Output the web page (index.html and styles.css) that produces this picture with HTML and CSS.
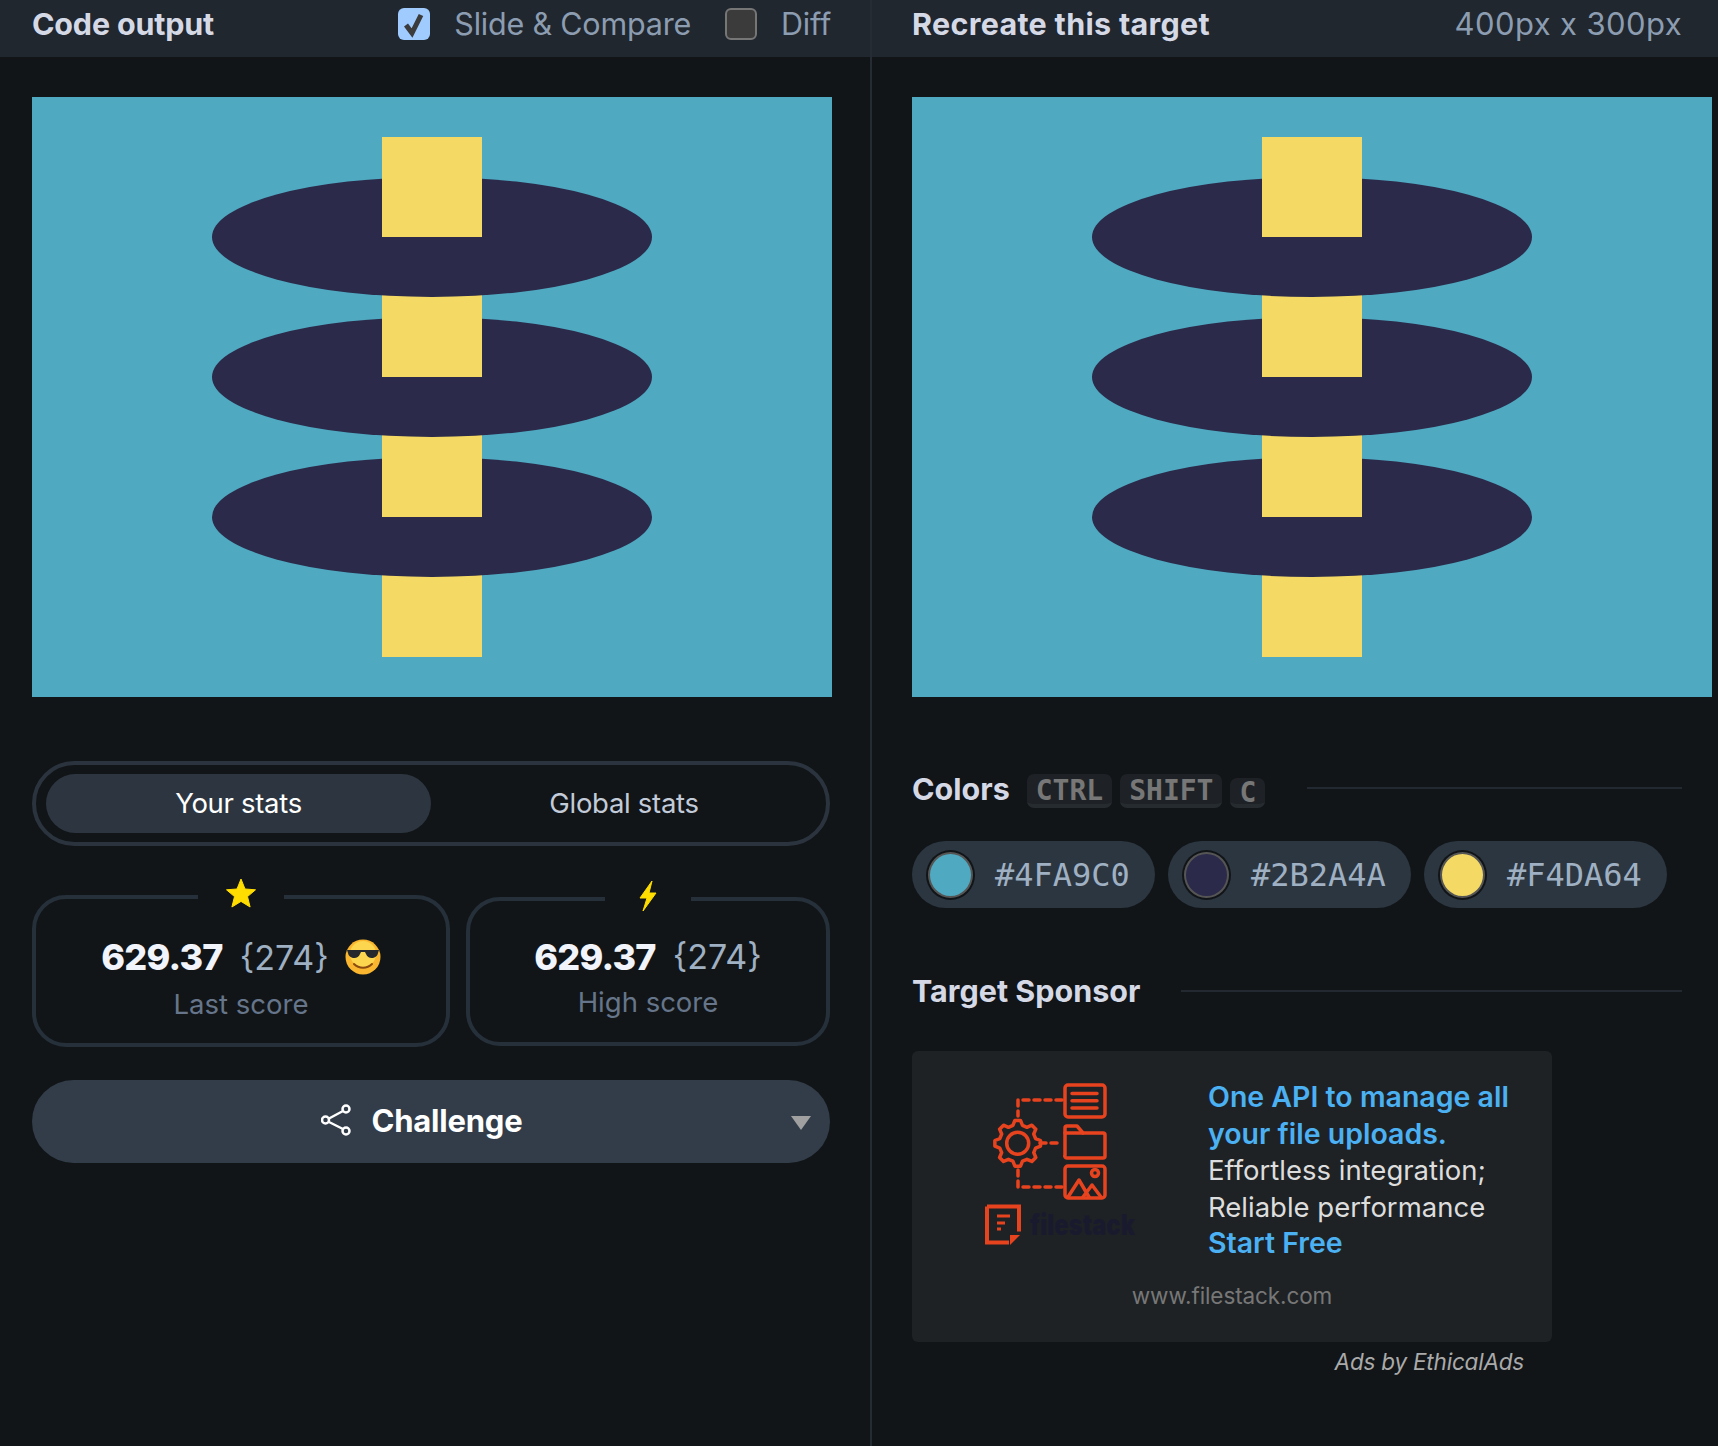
FILE: index.html
```html
<!DOCTYPE html>
<html lang="en">
<head>
    <meta charset="UTF-8">
    <meta name="viewport" content="width=device-width, initial-scale=1.0">
    <title>Code output</title>
    <link rel="stylesheet" href="styles.css">
</head>
<body>
    <svg class="defs" width="0" height="0">
        <symbol id="target-art" viewBox="0 0 800 600">
            <rect width="800" height="600" fill="#4FA9C0"/>
            <rect x="350" y="460" width="100" height="100" fill="#F4DA64"/>
            <ellipse cx="400" cy="420" rx="220" ry="60" fill="#2B2A4A"/>
            <rect x="350" y="320" width="100" height="100" fill="#F4DA64"/>
            <ellipse cx="400" cy="280" rx="220" ry="60" fill="#2B2A4A"/>
            <rect x="350" y="180" width="100" height="100" fill="#F4DA64"/>
            <ellipse cx="400" cy="140" rx="220" ry="60" fill="#2B2A4A"/>
            <rect x="350" y="40" width="100" height="100" fill="#F4DA64"/>
        </symbol>
    </svg>
    <div class="app">
        <div class="panel panel-output">
            <div class="panel-header">
                <h2>Code output</h2>
                <div class="header-options">
                    <label class="option">
                        <span class="checkbox checked">
                            <svg viewBox="0 0 32 32" width="32" height="32"><path d="M8 17l6 8L23 7" fill="none" stroke="#3b3b3b" stroke-width="5"/></svg>
                        </span>
                        Slide &amp; Compare
                    </label>
                    <label class="option">
                        <span class="checkbox"></span>
                        Diff
                    </label>
                </div>
            </div>
            <div class="panel-body">
                <svg class="canvas"><use href="#target-art"/></svg>
                <div class="stats-toggle">
                    <button class="toggle-btn active">Your stats</button>
                    <button class="toggle-btn">Global stats</button>
                </div>
                <div class="score-row">
                    <fieldset class="score-card score-last">
                        <legend>
                            <svg viewBox="0 0 30 30" width="30" height="30"><path d="M15 1l4 10 10.500 .8-8 6.800 2.600 10.400L15 23.400 5.900 29l2.600-10.400-8-6.800L11 11z" fill="#ffdd00" stroke="#ffdd00" stroke-linejoin="round"/></svg>
                        </legend>
                        <div class="score-value">
                            <strong>629.37</strong>
                            <span>{274}</span>
                            <svg class="emoji" viewBox="0 0 36 36" width="36" height="36">
                                <circle cx="18" cy="18" r="17.500" fill="#f9b62e"/>
                                <circle cx="18" cy="15" r="13" fill="#fdd64f"/>
                                <path d="M2 11h32l-1 3c-1 6-10 7-12 1l-1-2h-4l-1 2c-2 6-11 5-12-1z" fill="#25282c"/>
                                <path d="M9 25c5 5 13 5 18 0" fill="none" stroke="#8a4b12" stroke-width="2" stroke-linecap="round"/>
                            </svg>
                        </div>
                        <div class="score-label">Last score</div>
                    </fieldset>
                    <fieldset class="score-card score-high">
                        <legend>
                            <svg viewBox="0 0 30 32" width="30" height="32"><path d="M19 1L7 18h7l-4 13 13-18h-7z" fill="#ffdd00" stroke="#ffdd00" stroke-linejoin="round"/></svg>
                        </legend>
                        <div class="score-value">
                            <strong>629.37</strong>
                            <span>{274}</span>
                        </div>
                        <div class="score-label">High score</div>
                    </fieldset>
                </div>
                <button class="challenge-btn">
                    <svg viewBox="0 0 30 32" width="30" height="32">
                        <path d="M22 7L8 14.500M8 18l14 7" fill="none" stroke="#fff" stroke-width="2.500"/>
                        <circle cx="25" cy="5" r="3.500" fill="none" stroke="#fff" stroke-width="2.500"/>
                        <circle cx="4.500" cy="16" r="3.500" fill="none" stroke="#fff" stroke-width="2.500"/>
                        <circle cx="25" cy="27" r="3.500" fill="none" stroke="#fff" stroke-width="2.500"/>
                    </svg>
                    Challenge
                    <span class="caret"></span>
                </button>
            </div>
        </div>
        <div class="panel panel-target">
            <div class="panel-header">
                <h2>Recreate this target</h2>
                <span class="target-size">400px x 300px</span>
            </div>
            <div class="panel-body">
                <svg class="canvas"><use href="#target-art"/></svg>
                <div class="section-title colors-title">
                    <h3>Colors</h3>
                    <span class="keys">
                        <kbd>CTRL</kbd>
                        <kbd>SHIFT</kbd>
                        <kbd class="key-short">C</kbd>
                    </span>
                    <span class="section-rule"></span>
                </div>
                <div class="color-chips">
                    <div class="chip"><span class="swatch swatch-blue"></span>#4FA9C0</div>
                    <div class="chip"><span class="swatch swatch-navy"></span>#2B2A4A</div>
                    <div class="chip"><span class="swatch swatch-yellow"></span>#F4DA64</div>
                </div>
                <div class="section-title sponsor-title">
                    <h3>Target Sponsor</h3>
                    <span class="section-rule"></span>
                </div>
                <div class="ad-card">
                    <div class="ad-main">
                        <svg class="ad-logo" viewBox="0 0 200 190" width="200" height="190">
                            <g fill="none" stroke="#e8431f" stroke-width="3.500" stroke-linecap="round" stroke-linejoin="round">
                                <rect x="95" y="15" width="40" height="32" rx="3"/>
                                <path d="M102 23.500h25M102 30.700h25M102 38h25"/>
                                <path d="M95 85V58a2 2 0 0 1 2-2h10l6 7h20a2 2 0 0 1 2 2v21a2 2 0 0 1-2 2H97a2 2 0 0 1-2-3z"/>
                                <path d="M95 63h18"/>
                                <rect x="95" y="96" width="40" height="32" rx="3"/>
                                <circle cx="125" cy="103" r="3.500"/>
                                <path d="M98 127l11-17 10 17M113 127l9-12 9 12"/>
                                <path d="M92 30H48v16M48 100v17h44M70 73h22" stroke-dasharray="6 5"/>
                                <polygon transform="translate(47.700 73.300)" points="17.870,-4.790 22.830,-2.800 22.830,2.800 17.870,4.790 16.020,9.250 18.120,14.160 14.160,18.120 9.250,16.020 4.790,17.870 2.800,22.830 -2.800,22.830 -4.790,17.870 -9.250,16.020 -14.160,18.120 -18.120,14.160 -16.020,9.250 -17.870,4.790 -22.830,2.800 -22.830,-2.800 -17.870,-4.790 -16.020,-9.250 -18.120,-14.160 -14.160,-18.120 -9.250,-16.020 -4.790,-17.870 -2.800,-22.830 2.800,-22.830 4.790,-17.870 9.250,-16.020 14.160,-18.120 18.120,-14.160 16.020,-9.250"/>
                                <circle cx="47.700" cy="73.300" r="11"/>
                            </g>
                            <path d="M17 136.500h32v25M39 172.500H17v-36" fill="none" stroke="#e8431f" stroke-width="4"/>
                            <path d="M27 146h13M27 153h8M27 159h4" stroke="#e8431f" stroke-width="3"/>
                            <path d="M40 175v-10h10z" fill="#e8431f"/>
                            <text class="logo-word" x="60" y="165" textLength="105" lengthAdjust="spacingAndGlyphs">filestack</text>
                        </svg>
                        <p class="ad-copy">
                            <strong>One API to manage all your file uploads.</strong><br>
                            Effortless integration;<br>
                            Reliable performance<br>
                            <strong>Start Free</strong>
                        </p>
                    </div>
                    <div class="ad-url">www.filestack.com</div>
                </div>
                <div class="ad-credit">Ads by EthicalAds</div>
            </div>
        </div>
    </div>
</body>
</html>
```

FILE: styles.css
```css
* {
    box-sizing: border-box;
}
body {
    margin: 0;
    height: 1446px;
    overflow: hidden;
    font-family: 'Inter', sans-serif;
    background: #111518;
    color: #d5d9e6;
}
.defs {
    display: block;
    height: 0;
}
.app {
    display: flex;
    height: 100%;
}
.panel-output {
    width: 872px;
    border-right: 2px solid #262c34;
}
.panel-target {
    flex: 1;
    min-width: 0;
}
.panel-header {
    display: flex;
    align-items: center;
    justify-content: space-between;
    height: 57px;
    padding: 0 36px 10px 32px;
    background: #20272f;
}
.panel-target .panel-header {
    padding-left: 40px;
}
.panel-header h2 {
    margin: 0;
    font-size: 30.500px;
    font-weight: 700;
    letter-spacing: -0.2px;
    color: #d5d9e6;
}
.panel-target .panel-header h2 {
    letter-spacing: 0.3px;
}
.header-options {
    display: flex;
    gap: 34px;
    margin-right: 3px;
}
.option {
    display: flex;
    align-items: center;
    gap: 24px;
    font-size: 30.500px;
    color: #8d9db1;
    letter-spacing: -0.2px;
}
.checkbox {
    display: block;
    width: 32px;
    height: 32px;
    background: #3b3b3b;
    border: 2px solid #767676;
    border-radius: 6px;
}
.checkbox.checked {
    background: #9fcbff;
    border: 0;
}
.checkbox svg {
    display: block;
}
.target-size {
    font-size: 31px;
    color: #8d9db1;
    letter-spacing: 0.4px;
}
.panel-body {
    padding: 40px 0 0 32px;
}
.panel-target .panel-body {
    padding-left: 40px;
}
.canvas {
    display: block;
    width: 800px;
    height: 600px;
}

/* stats */
.stats-toggle {
    display: flex;
    width: 798px;
    height: 85px;
    margin-top: 64px;
    padding: 9px 9px 9px 10px;
    border: 4px solid #2b343e;
    border-radius: 43px;
}
.toggle-btn {
    flex: 1;
    padding: 0 0 2px;
    border: 0;
    border-radius: 30px;
    background: none;
    font-family: inherit;
    font-size: 27.500px;
    letter-spacing: -0.3px;
    color: #c3cbd8;
}
.toggle-btn.active {
    flex: 0 0 385px;
    background: #2d3640;
    color: #fff;
}
.score-row {
    display: flex;
    align-items: center;
    gap: 16px;
    width: 798px;
    margin-top: 32px;
}
.score-card {
    min-width: 0;
    margin: 0;
    padding: 0;
    border: 4px solid #26303a;
    border-radius: 34px;
    text-align: center;
}
.score-last {
    width: 418px;
    height: 169px;
}
.score-high {
    width: 364px;
    height: 166px;
}
.score-card legend {
    margin: 0 auto;
    padding: 0 28px 4px;
    line-height: 0;
}
.score-last legend {
    padding-bottom: 7px;
}
.score-high legend {
    padding-bottom: 6px;
}
.score-value {
    display: flex;
    align-items: center;
    justify-content: center;
    gap: 17px;
    height: 40px;
    font-size: 34px;
    color: #9fb0c3;
}
.score-last .score-value {
    margin-top: 22px;
}
.score-high .score-value {
    margin-top: 19px;
}
.score-value strong {
    font-size: 36px;
    font-weight: 800;
    letter-spacing: -0.8px;
    color: #f1f4fa;
}
.score-value .emoji {
    margin-left: -1px;
}
.score-label {
    font-size: 27.500px;
    color: #66758a;
}
.score-last .score-label {
    margin-top: 10px;
}
.score-high .score-label {
    margin-top: 8px;
}
.challenge-btn {
    position: relative;
    display: flex;
    align-items: center;
    justify-content: center;
    gap: 20px;
    width: 798px;
    height: 83px;
    margin-top: 33px;
    padding: 0 18px 3px 0;
    border: 0;
    border-radius: 42px;
    background: #323d49;
    font-family: inherit;
    font-size: 31px;
    font-weight: 700;
    letter-spacing: -0.2px;
    color: #fff;
}
.caret {
    position: absolute;
    right: 19px;
    top: 36px;
    border-left: 10px solid transparent;
    border-right: 10px solid transparent;
    border-top: 14px solid #a0a0a0;
}

/* target side */
.section-title {
    display: flex;
    align-items: center;
    width: 770px;
}
.section-title h3 {
    margin: 0;
    font-size: 30.500px;
    font-weight: 700;
    color: #d5d9e6;
}
.section-rule {
    flex: 1;
    height: 2px;
    background: #222930;
}
.colors-title {
    height: 34px;
    margin-top: 77px;
}
.colors-title h3 {
    margin-bottom: 6px;
}
.colors-title .section-rule {
    margin-bottom: 6px;
}
.keys {
    display: flex;
    align-items: flex-end;
    gap: 8px;
    height: 34px;
    margin: 0 42px 0 17px;
}
kbd {
    height: 34px;
    padding: 0 9px;
    border-bottom: 4px solid #262b30;
    border-radius: 7px;
    background: #1e2226;
    font-family: 'DejaVu Sans Mono', monospace;
    font-size: 28px;
    font-weight: 700;
    line-height: 34px;
    color: #777;
}
.key-short {
    height: 30px;
    line-height: 30px;
    padding: 0 9px;
}
.color-chips {
    display: flex;
    gap: 13px;
    margin-top: 33px;
}
.chip {
    display: flex;
    align-items: center;
    gap: 22px;
    width: 243px;
    height: 67px;
    padding-left: 16px;
    border-radius: 34px;
    background: #2c3640;
    font-family: 'DejaVu Sans Mono', monospace;
    font-size: 32px;
    color: #9fb0c3;
}
.swatch {
    width: 45px;
    height: 46px;
    border: 2px solid #555;
    border-radius: 50%;
    box-shadow: 0 0 0 2px #111518;
}
.swatch-blue {
    background: #4FA9C0;
}
.swatch-navy {
    background: #2B2A4A;
}
.swatch-yellow {
    background: #F4DA64;
}
.sponsor-title {
    height: 36px;
    margin-top: 64px;
}
.sponsor-title h3 {
    margin-right: 41px;
}
.sponsor-title .section-rule {
    margin-top: 2px;
}

/* ad */
.ad-card {
    width: 640px;
    height: 291px;
    margin-top: 43px;
    padding: 19px 0 0 58px;
    border-radius: 6px;
    background: #1e2225;
}
.ad-main {
    display: flex;
    gap: 38px;
    height: 212px;
}
.ad-logo {
    flex: none;
}
.logo-word {
    font-family: 'Inter', sans-serif;
    font-size: 28px;
    font-weight: 900;
    fill: #1a1a2e;
}
.ad-copy {
    width: 320px;
    margin: 9px 0 0;
    font-size: 27.500px;
    line-height: 36.500px;
    color: #ddd;
}
.ad-copy strong {
    font-size: 28.500px;
    font-weight: 600;
    color: #4bb1f2;
}
.ad-url {
    margin-left: -58px;
    text-align: center;
    font-size: 22.500px;
    letter-spacing: -0.1px;
    color: #777;
}
.ad-credit {
    width: 612px;
    margin-top: 6px;
    text-align: right;
    font-size: 22.500px;
    font-style: italic;
    letter-spacing: -0.2px;
    color: #aaa;
}
```
